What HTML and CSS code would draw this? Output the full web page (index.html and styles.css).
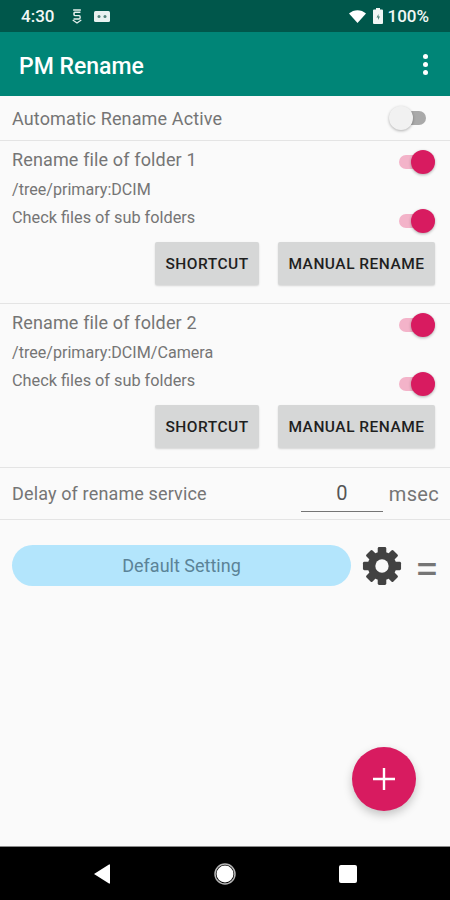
FILE: index.html
```html
<!DOCTYPE html>
<html lang="en">
<head>
  <meta charset="UTF-8" />
  <meta name="viewport" content="width=device-width, initial-scale=1.0" />
  <title>PM Rename</title>
  <link rel="stylesheet" href="styles.css">
</head>
<body>
  <div class="screen">
    <div class="status-bar">
      <span class="clock">4:30</span>
      <svg class="status-shield" width="12" height="17" viewBox="0 0 14 18" fill="none" stroke="#e3efec" stroke-width="1.7">
        <path d="M2.500 1.500h9M11 4H4.500C3 4 3 8 4.500 8h5c1.600 0 1.600 4 0 4H3"/>
        <path d="M2 13l5 3.500 5-3.500" stroke-width="1.500"/>
      </svg>
      <svg class="status-card" width="16" height="11" viewBox="0 0 16 11">
        <rect width="16" height="11" rx="1.500" fill="#e8f2f0"/>
        <circle cx="5" cy="5.500" r="1.500" fill="#4f8279"/>
        <circle cx="11" cy="5.500" r="1.500" fill="#4f8279"/>
      </svg>
      <span class="status-spacer"></span>
      <svg class="status-wifi" width="17" height="14" viewBox="0 0 17 14">
        <path d="M0 4.500C4.800 0 12.200 0 17 4.500L8.500 14z" fill="#fff"/>
      </svg>
      <svg class="status-battery" width="10" height="16" viewBox="0 0 10 16">
        <path d="M3 0h4v1.500h2a1 1 0 0 1 1 1V15a1 1 0 0 1-1 1H1a1 1 0 0 1-1-1V2.500a1 1 0 0 1 1-1h2z" fill="#f1f6f5"/>
        <path d="M5.500 6L3.500 9.500h1.500V12l2-3.500H5.500z" fill="#4f8279"/>
      </svg>
      <span class="battery-text">100%</span>
    </div>

    <header class="app-bar">
      <h1>PM Rename</h1>
      <div class="overflow-menu"><i></i><i></i><i></i></div>
    </header>

    <main class="content">
      <section class="row row-active">
        <span class="label">Automatic Rename Active</span>
        <span class="switch"></span>
      </section>

      <section class="folder">
        <div class="folder-head">
          <span class="label">Rename file of folder 1</span>
          <span class="switch on"></span>
        </div>
        <p class="path">/tree/primary:DCIM</p>
        <div class="folder-sub">
          <span class="sub-label">Check files of sub folders</span>
          <span class="switch on"></span>
        </div>
        <div class="folder-actions">
          <button class="btn btn-short">SHORTCUT</button>
          <button class="btn btn-long">MANUAL RENAME</button>
        </div>
      </section>

      <section class="folder">
        <div class="folder-head">
          <span class="label">Rename file of folder 2</span>
          <span class="switch on"></span>
        </div>
        <p class="path">/tree/primary:DCIM/Camera</p>
        <div class="folder-sub">
          <span class="sub-label">Check files of sub folders</span>
          <span class="switch on"></span>
        </div>
        <div class="folder-actions">
          <button class="btn btn-short">SHORTCUT</button>
          <button class="btn btn-long">MANUAL RENAME</button>
        </div>
      </section>

      <section class="row row-delay">
        <span class="label">Delay of rename service</span>
        <span class="delay-input">0</span>
        <span class="unit">msec</span>
      </section>

      <section class="preset">
        <button class="preset-pill">Default Setting</button>
        <svg class="gear" width="40" height="40" viewBox="0 0 42 42">
          <g fill="#424242">
            <circle cx="21" cy="21" r="15"/>
            <rect x="16.500" y="1" width="9" height="40" rx="1.500"/>
            <rect x="16.500" y="1" width="9" height="40" rx="1.500" transform="rotate(45 21 21)"/>
            <rect x="16.500" y="1" width="9" height="40" rx="1.500" transform="rotate(90 21 21)"/>
            <rect x="16.500" y="1" width="9" height="40" rx="1.500" transform="rotate(135 21 21)"/>
          </g>
          <circle cx="21" cy="21" r="7" fill="#fafafa"/>
        </svg>
        <span class="drag-handle">=</span>
      </section>

      <button class="fab" aria-label="Add">
        <svg width="22" height="22" viewBox="0 0 22 22"><path d="M11 0v22M0 11h22" stroke="#fff" stroke-width="2.400"/></svg>
      </button>
    </main>

    <nav class="nav-bar">
      <svg width="18" height="20" viewBox="0 0 18 20"><path d="M17 1v18a.6.6 0 0 1-1 .5L1 10 16 .5a.6.6 0 0 1 1 .5z" fill="#fff"/></svg>
      <svg width="22" height="22" viewBox="0 0 22 22"><circle cx="11" cy="11" r="8.500" fill="#fff"/><circle cx="11" cy="11" r="10" fill="none" stroke="#b5b5b5" stroke-width="1.500"/></svg>
      <svg width="18" height="18" viewBox="0 0 18 18"><rect width="18" height="18" rx="2" fill="#fff"/></svg>
    </nav>
  </div>
</body>
</html>
```

FILE: styles.css
```css
* {
  box-sizing: border-box;
}
body {
  margin: 0;
  font-family: Roboto, sans-serif;
  background: #fafafa;
}
.screen {
  width: 450px;
  height: 900px;
  display: flex;
  flex-direction: column;
  overflow: hidden;
}

/* status bar */
.status-bar {
  height: 32px;
  background: #00574b;
  color: #f2f7f6;
  display: flex;
  align-items: center;
  padding: 0 21px;
  flex: none;
}
.clock {
  font-size: 17px;
  font-weight: 500;
  width: 50px;
}
.status-shield {
  margin-right: 11px;
}
.status-spacer {
  flex: 1;
}
.status-battery {
  margin-left: 7px;
}
.battery-text {
  font-size: 17px;
  font-weight: 500;
  margin-left: 4px;
}

/* app bar */
.app-bar {
  height: 64px;
  background: #008577;
  color: white;
  display: flex;
  align-items: center;
  justify-content: space-between;
  padding: 0 22px 0 19px;
  flex: none;
}
.app-bar h1 {
  margin: 4px 0 0;
  font-size: 23px;
  font-weight: 500;
}
.overflow-menu {
  display: flex;
  flex-direction: column;
  gap: 3px;
}
.overflow-menu i {
  width: 5px;
  height: 5px;
  border-radius: 50%;
  background: white;
}

/* content */
.content {
  flex: 1;
  position: relative;
  background: #fafafa;
  color: #757575;
}
.label {
  font-size: 18px;
  letter-spacing: 0.14px;
}
.row {
  display: flex;
  align-items: center;
  padding: 0 12px;
  border-bottom: 1px solid #e4e4e4;
}
.row-active {
  height: 45px;
  justify-content: space-between;
  padding-right: 24px;
}
.row-delay {
  height: 52px;
  padding-right: 11px;
}
.row-delay .label {
  flex: 1;
}
.delay-input {
  width: 82px;
  height: 37px;
  margin-right: 6px;
  padding-top: 6px;
  text-align: center;
  font-size: 20px;
  color: #555;
  border-bottom: 1px solid #757575;
}
.unit {
  font-size: 20px;
  letter-spacing: 0.3px;
}

.switch {
  display: block;
  width: 36px;
  height: 14px;
  position: relative;
  border-radius: 7px;
  background: #a9a9a9;
}
.switch::after {
  content: "";
  position: absolute;
  left: -1px;
  top: -5px;
  width: 24px;
  height: 24px;
  border-radius: 50%;
  background: #f1f1f1;
  box-shadow: 0 1px 3px rgba(0,0,0,0.3);
}
.switch.on {
  background: #f3b3c9;
}
.switch.on::after {
  left: auto;
  right: 0;
  background: #d81b60;
}

.folder {
  height: 163px;
  padding: 0 15px 0 12px;
  border-bottom: 1px solid #e4e4e4;
}
.folder + .folder {
  height: 164px;
}
.folder-head {
  height: 41px;
  display: flex;
  align-items: center;
  justify-content: space-between;
  padding-top: 1px;
}
.folder-head .label {
  margin-top: -5px;
}
.path {
  margin: -7px 0 0;
  height: 29px;
  line-height: 29px;
  font-size: 16.100px;
}
.folder-sub {
  height: 30px;
  display: flex;
  align-items: center;
  justify-content: space-between;
  margin-top: 2px;
}
.sub-label {
  font-size: 16.300px;
  margin-top: -8px;
}
.folder-actions {
  display: flex;
  justify-content: flex-end;
  gap: 19px;
  margin-top: 6px;
}
.btn {
  height: 43px;
  padding: 0;
  border: none;
  border-radius: 2px;
  background: #d6d7d7;
  color: #1f1f1f;
  font-family: Roboto, sans-serif;
  font-size: 15.500px;
  font-weight: 500;
  letter-spacing: 0.5px;
  box-shadow: 0 1px 2px rgba(0,0,0,0.15);
}
.btn-short {
  width: 104px;
}
.btn-long {
  width: 157px;
}

.preset {
  display: flex;
  align-items: flex-start;
  padding: 25px 0 0 12px;
}
.preset-pill {
  flex: none;
  width: 339px;
  height: 41px;
  padding: 0;
  border: none;
  border-radius: 21px;
  background: #b3e5fc;
  color: #5b8397;
  font-family: Roboto, sans-serif;
  font-size: 18px;
}
.gear {
  flex: none;
  margin: 1px 0 0 11px;
}
.drag-handle {
  flex: none;
  margin: 3px 0 0 13px;
  font-size: 43px;
  line-height: 41px;
  color: #757575;
}

.fab {
  position: absolute;
  left: 352px;
  top: 651px;
  width: 64px;
  height: 64px;
  padding: 0;
  border: none;
  border-radius: 50%;
  background: #d81b60;
  display: flex;
  align-items: center;
  justify-content: center;
  box-shadow: 0 4px 10px rgba(0,0,0,0.22);
}

/* navigation bar */
.nav-bar {
  height: 54px;
  background: #000;
  border-top: 1px solid #8a8a8a;
  display: flex;
  align-items: center;
  flex: none;
  padding: 0 93px;
  justify-content: space-between;
}
```
